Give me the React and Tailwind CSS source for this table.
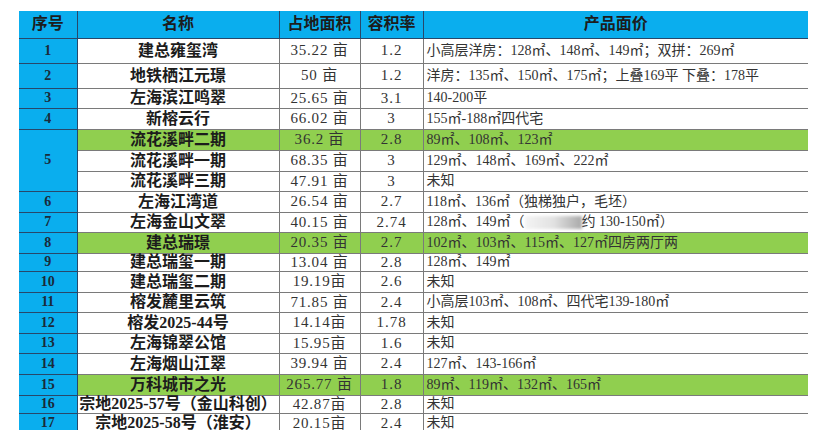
import React from "react";

const rows = [
  { no: "1", name: "建总雍玺湾", area: "35.22 亩", far: "1.2", product: "小高层洋房：128㎡、148㎡、149㎡；双拼：269㎡", h: "h-[25px]" },
  { no: "2", name: "地铁栖江元璟", area: "50 亩", far: "1.2", product: "洋房：135㎡、150㎡、175㎡；上叠169平 下叠：178平", h: "h-[25px]" },
  { no: "3", name: "左海滨江鸣翠", area: "25.65 亩", far: "3.1", product: "140-200平", h: "h-[20px]" },
  { no: "4", name: "新榕云行", area: "66.02 亩", far: "3", product: "155㎡-188㎡四代宅", h: "h-[21px]" },
  { no: "5", span: 3, name: "流花溪畔二期", area: "36.2 亩", far: "2.8", product: "89㎡、108㎡、123㎡", green: true, h: "h-[21px]" },
  { name: "流花溪畔一期", area: "68.35 亩", far: "3", product: "129㎡、148㎡、169㎡、222㎡", h: "h-[21px]" },
  { name: "流花溪畔三期", area: "47.91 亩", far: "3", product: "未知", h: "h-[20px]" },
  { no: "6", name: "左海江湾道", area: "26.54 亩", far: "2.7", product: "118㎡、136㎡（独梯独户，毛坯）", h: "h-[21px]" },
  { no: "7", name: "左海金山文翠", area: "40.15 亩", far: "2.74", blurred: true, h: "h-[20px]" },
  { no: "8", name: "建总瑞璟", area: "20.35 亩", far: "2.7", product: "102㎡、103㎡、115㎡、127㎡四房两厅两", green: true, h: "h-[21px]" },
  { no: "9", name: "建总瑞玺一期", area: "13.04 亩", far: "2.8", product: "128㎡、149㎡", h: "h-[18px]" },
  { no: "10", name: "建总瑞玺二期", area: "19.19亩", far: "2.6", product: "未知", h: "h-[21px]" },
  { no: "11", name: "榕发麓里云筑", area: "71.85 亩", far: "2.4", product: "小高层103㎡、108㎡、四代宅139-180㎡", h: "h-[20px]" },
  { no: "12", name: "榕发2025-44号", area: "14.14亩", far: "1.78", product: "未知", h: "h-[21px]" },
  { no: "13", name: "左海锦翠公馆", area: "15.95亩", far: "1.6", product: "未知", h: "h-[20px]" },
  { no: "14", name: "左海烟山江翠", area: "39.94 亩", far: "2.4", product: "127㎡、143-166㎡", h: "h-[21px]" },
  { no: "15", name: "万科城市之光", area: "265.77 亩", far: "1.8", product: "89㎡、119㎡、132㎡、165㎡", green: true, h: "h-[21px]" },
  { no: "16", name: "宗地2025-57号（金山科创）", area: "42.87亩", far: "2.8", product: "未知", h: "h-[18px]" },
  { no: "17", name: "宗地2025-58号（淮安）", area: "20.15亩", far: "2.4", product: "未知", h: "h-[20px]" },
];

const serif = "font-['Liberation_Serif','Noto_Sans_CJK_SC',serif]";

export default function App() {
  return (
    <div className={`w-[816px] h-[441px] bg-white pt-[11px] pl-[19px] ${serif} text-[#1c1c1c]`}>
      <div className="w-[789px] h-[419px] overflow-hidden">
        <table className="table-fixed border-collapse w-[789px]">
          <colgroup>
            <col className="w-[58px]" />
            <col className="w-[202px]" />
            <col className="w-[81px]" />
            <col className="w-[63px]" />
            <col className="w-[385px]" />
          </colgroup>
          <thead>
            <tr className="h-[27px] bg-[#0aaeee] font-bold text-[16px] leading-[16px]">
              <th className="p-0 border-r border-b border-[#28476a]">序号</th>
              <th className="p-0 border-r border-b border-[#28476a]">名称</th>
              <th className="p-0 border-r border-b border-[#28476a]">占地面积</th>
              <th className="p-0 border-r border-b border-[#28476a]">容积率</th>
              <th className="p-0 border-b border-[#28476a]">产品面价</th>
            </tr>
          </thead>
          <tbody>
            {rows.map((r, idx) => {
              const bg = r.green ? "bg-[#90cf4f]" : "bg-white";
              return (
                <tr key={idx} className={r.h}>
                  {r.no && (
                    <td
                      rowSpan={r.span || 1}
                      className="p-0 bg-[#0aaeee] border-r border-b border-[#28476a] text-center font-bold text-[14px] leading-[14px] text-[#1a2a3a]"
                    >
                      {r.no}
                    </td>
                  )}
                  <td className={`p-0 ${bg} border-r border-b border-[#7a7a7a] text-center font-bold text-[16px] leading-[16px] whitespace-nowrap`}>
                    {r.name}
                  </td>
                  <td className={`p-0 ${bg} border-r border-b border-[#7a7a7a] text-center text-[15px] leading-[15px] tracking-[0.8px] text-[#333] whitespace-nowrap`}>
                    {r.area}
                  </td>
                  <td className={`p-0 ${bg} border-r border-b border-[#7a7a7a] text-center text-[15px] leading-[15px] tracking-[1px] text-[#333]`}>
                    {r.far}
                  </td>
                  <td className={`p-0 pl-[3px] ${bg} border-b border-[#7a7a7a] text-left text-[14px] leading-[14px] text-[#333] whitespace-nowrap`}>
                    {r.blurred ? (
                      <>
                        128㎡、149㎡（
                        <span className="inline-block align-middle w-[57px] h-[13px] bg-linear-to-r from-[#f4f4f4] via-[#e2e2e2] to-[#a9a9a9] blur-[1.5px]" />
                        约 130-150㎡）
                      </>
                    ) : (
                      r.product
                    )}
                  </td>
                </tr>
              );
            })}
          </tbody>
        </table>
      </div>
    </div>
  );
}
